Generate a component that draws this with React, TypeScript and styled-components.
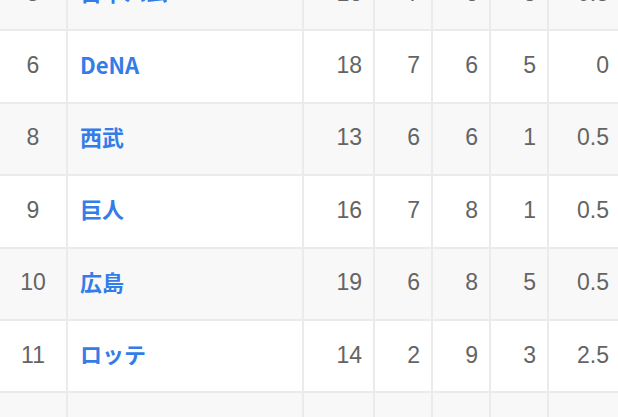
import React from "react";
import styled, { createGlobalStyle } from "styled-components";

const Global = createGlobalStyle`
  html, body { margin: 0; padding: 0; background: #ffffff; }
  body { overflow: hidden; width: 618px; height: 417px; }
`;

const Table = styled.div`
  width: 620px;
  margin-top: -41px;
  font-family: "Liberation Sans", "Noto Sans CJK JP", sans-serif;
  font-size: 23px;
  color: #646464;
`;

const Row = styled.div<{ $alt: boolean }>`
  display: grid;
  grid-template-columns: 68px 236px 71px 58px 58px 58px 71px;
  height: 72.4px;
  box-sizing: border-box;
  border-bottom: 2px solid #ebebeb;
  background: ${(p) => (p.$alt ? "#f8f8f8" : "#ffffff")};
`;

const Cell = styled.div<{ $align: "center" | "left" | "right"; $last?: boolean }>`
  display: flex;
  align-items: center;
  justify-content: ${(p) =>
    p.$align === "center" ? "center" : p.$align === "left" ? "flex-start" : "flex-end"};
  padding: ${(p) =>
    p.$align === "left" ? "0 0 6px 12px" : p.$align === "right" ? "0 11px 2px 0" : "0 0 2px 0"};
  border-right: ${(p) => (p.$last ? "none" : "2px solid #ebebeb")};
  box-sizing: border-box;
  line-height: 1;
`;

const TeamLink = styled.a`
  font-family: "Noto Sans CJK JP", sans-serif;
  color: #347ce8;
  font-weight: 700;
  text-decoration: none;
  font-size: 22px;
`;

type Team = { rank: string; name: string; vals: string[] };

const teams: Team[] = [
  { rank: "5", name: "日本ハム", vals: ["16", "7", "6", "3", "0.5"] },
  { rank: "6", name: "DeNA", vals: ["18", "7", "6", "5", "0"] },
  { rank: "8", name: "西武", vals: ["13", "6", "6", "1", "0.5"] },
  { rank: "9", name: "巨人", vals: ["16", "7", "8", "1", "0.5"] },
  { rank: "10", name: "広島", vals: ["19", "6", "8", "5", "0.5"] },
  { rank: "11", name: "ロッテ", vals: ["14", "2", "9", "3", "2.5"] },
  { rank: "12", name: "楽天", vals: ["15", "4", "9", "2", "3.5"] },
];

export default function App() {
  return (
    <>
      <Global />
      <Table>
        {teams.map((t, i) => (
          <Row key={t.rank} $alt={i % 2 === 0}>
            <Cell $align="center">{t.rank}</Cell>
            <Cell $align="left">
              <TeamLink href="#">{t.name}</TeamLink>
            </Cell>
            {t.vals.map((v, j) => (
              <Cell key={j} $align="right" $last={j === t.vals.length - 1}>
                {v}
              </Cell>
            ))}
          </Row>
        ))}
      </Table>
    </>
  );
}
